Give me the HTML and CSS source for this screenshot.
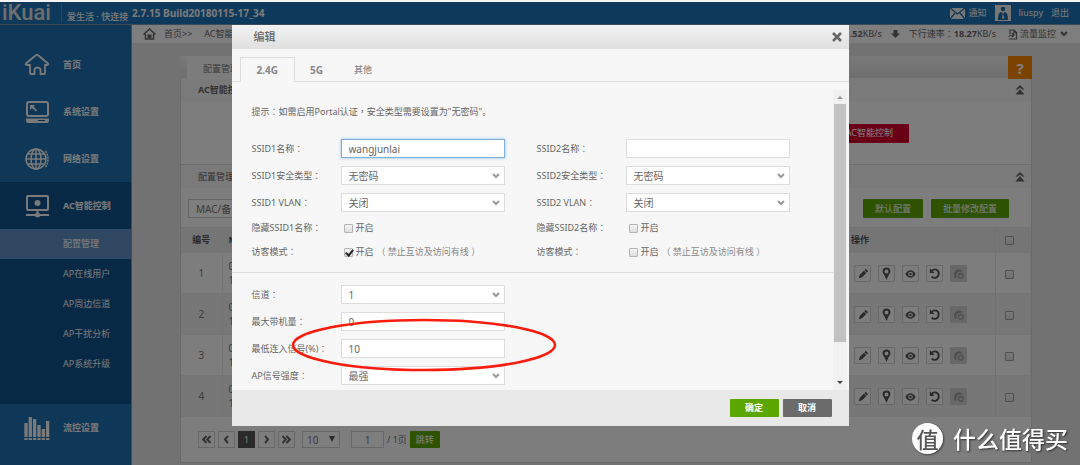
FILE: index.html
```html
<!DOCTYPE html>
<html lang="zh-CN">
<head>
<meta charset="utf-8">
<meta name="viewport" content="width=device-width, initial-scale=1">
<title>iKuai</title>
<link rel="stylesheet" href="styles.css">
</head>
<body>
<svg class="defs" aria-hidden="true">
  <symbol id="chev" viewBox="0 0 8 6"><path d="M1 1l3 3 3-3" fill="none" stroke="currentColor" stroke-width="2"/></symbol>
  <symbol id="pencil" viewBox="0 0 16 16"><path d="M4 13l1-3.500 4.500-4.500 2.500 2.500L7.500 12zM10 4.500l1.500-1.500 2.500 2.500L12.500 7z" fill="currentColor"/></symbol>
  <symbol id="pin" viewBox="0 0 16 16"><path fill-rule="evenodd" d="M8 1.500a4.200 4.200 0 0 1 4.200 4.200c0 2-1.700 3.300-2.500 5.300L8 15l-1.700-4C5.500 9 3.800 7.700 3.800 5.700A4.200 4.200 0 0 1 8 1.500zM8 3.700a2.100 2.100 0 1 0 0 4.200 2.100 2.100 0 0 0 0-4.200z" fill="currentColor"/></symbol>
  <symbol id="eye" viewBox="0 0 16 16"><path fill-rule="evenodd" d="M2.500 8.500C4 5.800 6 4.500 8 4.500s4 1.300 5.500 4c-1.500 2.700-3.500 4-5.500 4s-4-1.300-5.500-4zM8 6a2.500 2.500 0 1 0 0 5 2.500 2.500 0 0 0 0-5z" fill="currentColor"/><circle cx="8" cy="8.500" r="1.300" fill="currentColor"/></symbol>
  <symbol id="undo" viewBox="0 0 16 16"><path d="M5 5.200C8 2 12.500 4 12.500 8c0 4.500-5 5.800-7.500 3.500" fill="none" stroke="currentColor" stroke-width="2"/><path d="M3 2.500v5h5z" fill="currentColor"/></symbol>
  <symbol id="upg" viewBox="0 0 16 16"><path d="M4 12.500C2.500 9 3.500 4.500 8 3.500c2 0 3.500 1 4.500 2.500H8C6 7 5.500 9 6 12.500z" fill="currentColor"/><circle cx="10.500" cy="10.500" r="2.500" fill="none" stroke="currentColor" stroke-width="1.500"/></symbol>
  <symbol id="fold" viewBox="0 0 10 10"><path d="M5 0l4.500 4.500H7.500L5 2.800 2.500 4.500H.5z M5 4l4.500 5.500H.5z" fill="currentColor"/></symbol>
</svg>

<header class="top">
  <span class="logo">iKuai</span>
  <span class="slogan">爱生活 · 快连接</span>
  <span class="version">2.7.15 Build20180115-17_34</span>
  <nav class="user">
    <a href="#"><svg width="15" height="11" viewBox="0 0 15 11"><path d="M0 0h15v11H0z" fill="#eee"/><path d="M0 0l7.500 6L15 0M0 11l5-6M15 11l-5-6" fill="none" stroke="#1b6ca8" stroke-width="1.300"/></svg>通知</a>
    <a href="#"><svg width="16" height="16" viewBox="0 0 16 16"><path d="M0 0h16v16H0z" fill="#eee"/><circle cx="8" cy="4" r="2.200" fill="#1b6ca8"/><path d="M3 15c0-5 1-8 3.500-8l1.500 2 1.500-2C12 7 13 10 13 15z" fill="#1b6ca8"/><path d="M8 8l1 5-1 1-1-1z" fill="#eee"/></svg><span>liuspy</span></a>
    <a href="#">退出</a>
  </nav>
</header>

<div class="layout">
  <aside class="side">
    <a class="item" href="#"><svg width="26" height="26" viewBox="0 0 26 26"><path d="M6 13H3q-2 0-1-1.500L11.500 3.500q1.500-1.200 3 0L24 11.500q1 1.500-1 1.500h-2v8q0 1-1 1h-3.500v-5q-3.500-3-6 0v5H7q-1 0-1-1z" fill="none" stroke="currentColor" stroke-width="1.800" stroke-linejoin="round"/></svg>首页</a>
    <a class="item" href="#"><svg width="26" height="26" viewBox="0 0 26 26"><rect x="3" y="3" width="21" height="14" rx="2" fill="none" stroke="currentColor" stroke-width="2"/><path d="M6 6h5l-1.500 1.500 3.500 4-1 1-4-3.500L6 11z" fill="currentColor"/><path d="M2 19.500h23V22q0 2-2 2H4q-2 0-2-2z" fill="currentColor"/><path d="M14 21.500h7" stroke="#20598a"/></svg>系统设置</a>
    <a class="item" href="#"><svg width="26" height="26" viewBox="0 0 26 26" fill="none" stroke="currentColor" stroke-width="1.500"><circle cx="12" cy="13" r="10"/><ellipse cx="12" cy="13" rx="5" ry="10"/><path d="M12 3v20M2 13h20M4 8h16M4 18h16"/><path d="M21.500 5q5 8 0 16" stroke-dasharray="2 1"/></svg>网络设置</a>
    <a class="item on" href="#"><svg width="26" height="26" viewBox="0 0 26 26"><rect x="3" y="3" width="21" height="14" rx="1" fill="none" stroke="currentColor" stroke-width="2"/><circle cx="13.500" cy="10" r="3" fill="currentColor"/><path d="M13.500 17v5M2 22h23" stroke="currentColor" stroke-width="2"/><circle cx="13.500" cy="22" r="2.500" fill="currentColor"/></svg>AC智能控制</a>
    <nav class="sub">
      <a class="cur" href="#">配置管理</a>
      <a href="#">AP在线用户</a>
      <a href="#">AP周边信道</a>
      <a href="#">AP干扰分析</a>
      <a href="#">AP系统升级</a>
    </nav>
    <a class="item" href="#"><svg width="26" height="26" viewBox="0 0 26 26"><path d="M2 22V8M6.300 22V2M10.600 22V4M15 22V10M19.300 22v-8M23.600 22V6M2 25v-2M6.300 25v-2M10.600 25v-2M15 25v-2M19.300 25v-2M23.600 25v-2" stroke="currentColor" stroke-width="3.300"/></svg>流控设置</a>
    <a class="item" href="#" aria-label="更多"><svg width="26" height="26" viewBox="0 0 26 26"><rect x="6" y="3" width="19" height="20" rx="2" fill="currentColor"/></svg></a>
  </aside>

  <main class="main">
    <div class="crumbs">
      <svg width="13" height="12" viewBox="0 0 13 12"><path d="M.5 6.500l6-5.500 6 5.500M2.500 6v5h8V6" fill="none" stroke="#666" stroke-width="1.500"/><path d="M4.500 6.500h4V10h-4z" fill="#666"/></svg>
      <a href="#">首页&gt;&gt;</a><a href="#">AC智能控制</a>
      <span class="rate"><b>.52</b>KB/s</span>
      <svg class="down" width="9" height="9" viewBox="0 0 9 9"><path d="M2.500 0h4v3.500H9L4.500 8 0 3.500h2.500z" fill="#666"/></svg>
      <span>下行速率<span class="mid" lang="zh-TW">：</span><b>18.27</b>KB/s</span>
      <a class="mon" href="#"><svg width="10" height="11" viewBox="0 0 10 11"><path d="M2 5V1h4l2.500 2.500V10H1M6 1v3h2.500M1 8q0-2 5-2M4 4l2 2-2 2" fill="none" stroke="#666" stroke-width="1.200"/></svg>流量监控<svg width="8" height="6"><use href="#chev"/></svg></a>
    </div>

    <section class="panel">
      <div class="tabbar"><span class="tab">配置管理</span><button class="help" aria-label="帮助">?</button></div>
      <h2 class="head"><b>AC智能控制</b><svg width="10" height="10"><use href="#fold"/></svg></h2>
      <div class="ctl"><button class="btn red">AC智能控制</button></div>
      <h2 class="head line">配置管理<svg width="10" height="10"><use href="#fold"/></svg></h2>
      <div class="tools">
        <select class="find" aria-label="搜索条件"><option>MAC/备注</option></select>
        <button class="btn green">默认配置</button>
        <button class="btn green">批量修改配置</button>
      </div>
      <table class="list">
        <colgroup><col class="c-no"><col><col class="c-op"><col class="c-ck"></colgroup>
        <thead><tr><th>编号</th><th class="l">MAC</th><th class="l">操作</th><th><input type="checkbox" aria-label="全选"></th></tr></thead>
        <tbody>
          <tr><td>1</td><td class="l">0<br>1</td><td class="l"><div class="ops"><button aria-label="编辑"><svg><use href="#pencil"/></svg></button><button aria-label="定位"><svg><use href="#pin"/></svg></button><button aria-label="查看"><svg><use href="#eye"/></svg></button><button aria-label="重启"><svg><use href="#undo"/></svg></button><button aria-label="升级" disabled><svg><use href="#upg"/></svg></button></div></td><td><input type="checkbox" aria-label="选择 1"></td></tr>
          <tr><td>2</td><td class="l">0<br>1</td><td class="l"><div class="ops"><button aria-label="编辑"><svg><use href="#pencil"/></svg></button><button aria-label="定位"><svg><use href="#pin"/></svg></button><button aria-label="查看"><svg><use href="#eye"/></svg></button><button aria-label="重启"><svg><use href="#undo"/></svg></button><button aria-label="升级" disabled><svg><use href="#upg"/></svg></button></div></td><td><input type="checkbox" aria-label="选择 2"></td></tr>
          <tr><td>3</td><td class="l">0<br>1</td><td class="l"><div class="ops"><button aria-label="编辑"><svg><use href="#pencil"/></svg></button><button aria-label="定位"><svg><use href="#pin"/></svg></button><button aria-label="查看"><svg><use href="#eye"/></svg></button><button aria-label="重启"><svg><use href="#undo"/></svg></button><button aria-label="升级" disabled><svg><use href="#upg"/></svg></button></div></td><td><input type="checkbox" aria-label="选择 3"></td></tr>
          <tr><td>4</td><td class="l">0<br>1</td><td class="l"><div class="ops"><button aria-label="编辑"><svg><use href="#pencil"/></svg></button><button aria-label="定位"><svg><use href="#pin"/></svg></button><button aria-label="查看"><svg><use href="#eye"/></svg></button><button aria-label="重启"><svg><use href="#undo"/></svg></button><button aria-label="升级" disabled><svg><use href="#upg"/></svg></button></div></td><td><input type="checkbox" aria-label="选择 4"></td></tr>
        </tbody>
      </table>
      <div class="pager">
        <button class="pg" aria-label="首页"><svg width="9" height="9" viewBox="0 0 9 9"><path d="M4.500 1L1.200 4.500l3.300 3.500M8.500 1L5.200 4.500 8.500 8"/></svg></button>
        <button class="pg" aria-label="上一页"><svg width="9" height="9" viewBox="0 0 9 9"><path d="M6 1L3 4.500 6 8"/></svg></button>
        <button class="pg now">1</button>
        <button class="pg" aria-label="下一页"><svg width="9" height="9" viewBox="0 0 9 9"><path d="M3 1l3 3.500L3 8"/></svg></button>
        <button class="pg" aria-label="末页"><svg width="9" height="9" viewBox="0 0 9 9"><path d="M.5 1l3.300 3.500L.5 8M4.500 1l3.300 3.500L4.500 8"/></svg></button>
        <span class="size"><select aria-label="每页条数"><option>10</option></select><svg width="6" height="6" viewBox="0 0 6 6"><path d="M0 0h6L3 6z" fill="#555"/></svg></span>
        <input class="goto" type="text" value="1" aria-label="页码"><span>/ 1页</span>
        <button class="btn green go">跳转</button>
      </div>
    </section>
  </main>
</div>

<div class="mask">
  <div class="modal" role="dialog" aria-labelledby="dlg">
    <div class="title"><h1 id="dlg">编辑</h1><button aria-label="关闭"><svg width="10" height="10" viewBox="0 0 10 10"><path d="M1 1l8 8M9 1L1 9" stroke="#666" stroke-width="2.500"/></svg></button></div>
    <div class="tabs"><button class="on">2.4G</button><button>5G</button><button>其他</button></div>
    <div class="body">
      <form class="form" id="f">
        <p class="tip">提示<span class="mid" lang="zh-TW">：</span>如需启用Portal认证<span class="mid" lang="zh-TW">，</span>安全类型需要设置为"无密码"。</p>
        <div class="cols">
          <div class="col">
            <div class="row"><label for="s1">SSID1名称<span class="mid" lang="zh-TW">：</span></label><input class="box focus" id="s1" type="text" value="wangjunlai"></div>
            <div class="row"><label for="t1">SSID1安全类型<span class="mid" lang="zh-TW">：</span></label><span class="sel"><select class="box" id="t1"><option>无密码</option></select><svg width="8" height="6"><use href="#chev"/></svg></span></div>
            <div class="row"><label for="v1">SSID1 VLAN<span class="mid" lang="zh-TW">：</span></label><span class="sel"><select class="box" id="v1"><option>关闭</option></select><svg width="8" height="6"><use href="#chev"/></svg></span></div>
            <div class="row ck"><span class="lab">隐藏SSID1名称<span class="mid" lang="zh-TW">：</span></span><label><input type="checkbox">开启</label></div>
            <div class="row ck"><span class="lab">访客模式<span class="mid" lang="zh-TW">：</span></span><label><input type="checkbox" checked>开启<em>（ 禁止互访及访问有线 ）</em></label></div>
          </div>
          <div class="col">
            <div class="row"><label for="s2">SSID2名称<span class="mid" lang="zh-TW">：</span></label><input class="box" id="s2" type="text"></div>
            <div class="row"><label for="t2">SSID2安全类型<span class="mid" lang="zh-TW">：</span></label><span class="sel"><select class="box" id="t2"><option>无密码</option></select><svg width="8" height="6"><use href="#chev"/></svg></span></div>
            <div class="row"><label for="v2">SSID2 VLAN<span class="mid" lang="zh-TW">：</span></label><span class="sel"><select class="box" id="v2"><option>关闭</option></select><svg width="8" height="6"><use href="#chev"/></svg></span></div>
            <div class="row ck"><span class="lab">隐藏SSID2名称<span class="mid" lang="zh-TW">：</span></span><label><input type="checkbox">开启</label></div>
            <div class="row ck"><span class="lab">访客模式<span class="mid" lang="zh-TW">：</span></span><label><input type="checkbox">开启<em>（ 禁止互访及访问有线 ）</em></label></div>
          </div>
        </div>
        <hr>
        <div class="cols">
          <div class="col">
            <div class="row"><label for="ch">信道<span class="mid" lang="zh-TW">：</span></label><span class="sel"><select class="box" id="ch"><option>1</option></select><svg width="8" height="6"><use href="#chev"/></svg></span></div>
            <div class="row"><label for="mx">最大带机量<span class="mid" lang="zh-TW">：</span></label><input class="box" id="mx" type="text" value="0"></div>
            <div class="row"><label for="mn">最低连入信号(%)<span class="mid" lang="zh-TW">：</span></label><input class="box" id="mn" type="text" value="10"></div>
            <div class="row"><label for="pw">AP信号强度<span class="mid" lang="zh-TW">：</span></label><span class="sel"><select class="box" id="pw"><option>最强</option></select><svg width="8" height="6"><use href="#chev"/></svg></span></div>
          </div>
        </div>
      </form>
      <div class="scroll" aria-hidden="true">
        <svg width="6" height="14" viewBox="0 0 6 14"><path d="M0 9h6L3 6z" fill="#999"/></svg>
        <i></i>
        <svg width="6" height="14" viewBox="0 0 6 14"><path d="M0 5h6L3 8z" fill="#444"/></svg>
      </div>
    </div>
    <div class="foot"><button class="btn ok">确定</button><button class="btn no">取消</button></div>
    <svg class="ring" width="266" height="54" viewBox="0 0 266 54"><ellipse cx="133" cy="27" rx="131" ry="25" fill="none" stroke="#fb1c0c" stroke-width="2.500"/></svg>
  </div>
</div>

<div class="mark"><span class="seal">值</span><span>什么值得买</span></div>
</body>
</html>
```
FILE: styles.css
```css
* { box-sizing: border-box; }
body {
  margin: 0;
  height: 100vh;
  overflow: hidden;
  display: flex;
  flex-direction: column;
  background: #e4e4e4;
  color: #666;
  font: 9px/14px "Noto Sans", "Noto Sans CJK SC", sans-serif;
}
a { color: inherit; text-decoration: none; }
button, input, select { font: inherit; color: inherit; margin: 0; padding: 0; border: 0; border-radius: 0; outline: 0; }
select { appearance: none; }
h1, h2, p { margin: 0; font-size: inherit; font-weight: normal; }
svg { display: block; flex: none; }
.defs { position: absolute; width: 0; height: 0; }
.mid { font-family: "Noto Sans CJK TC", sans-serif; line-height: 1; }

.top {
  flex: none;
  display: flex;
  align-items: center;
  height: 25px;
  padding: 0 11px 0 2px;
  border-top: 2px solid #f4f4f4;
  border-bottom: 1px solid #7a97ad;
  background: #1c72b4;
  color: #f6f6f6;
}
.logo { width: 59px; font: 500 22px/22px Roboto, sans-serif; color: #ddd; }
.slogan { padding: 7px 0 0 5px; border-left: 1px solid #5b92bd; line-height: 12px; width: 71px; white-space: nowrap; font-weight: 500; }
.version { font-size: 10px; font-weight: bold; white-space: nowrap; }
.user { margin-left: auto; display: flex; gap: 8px; }
.user a { display: flex; align-items: center; gap: 4px; }
.user a span { padding-left: 4px; }

.layout { flex: 1; display: flex; min-height: 0; }
.side { width: 132px; flex: none; padding-top: 16px; background: #1e70b0; color: #f4f4f4; border-right: 1px solid #8a9aa8; overflow: hidden; }
.item { display: flex; align-items: center; gap: 13px; height: 47px; padding-left: 24px; font-weight: bold; }
.item.on { background: #10528c; }
.sub { background: #10528c; padding-bottom: 25px; }
.sub a { display: block; padding-left: 63px; line-height: 30px; }
.sub .cur { background: #5e8fc2; font-weight: 500; }

.main { flex: 1; min-width: 0; display: flex; flex-direction: column; }
.crumbs { display: flex; align-items: center; height: 18px; padding: 0 12px 0 11px; background: #fdfdfd; color: #666; }
.crumbs > a { padding-left: 8px; }
.crumbs > a + a { padding-left: 12px; }
.rate { margin-left: auto; }
.down { margin: 0 9px; }
.crumbs .mon { display: flex; align-items: center; gap: 2px; padding-left: 12px; }
.mon svg:last-child { margin-left: 2px; }

.panel { margin: 13px 48px 0; background: #fbfbfb; border: 1px solid #d4d4d4; color: #777; }
.tabbar { display: flex; height: 23px; padding-left: 7px; background: linear-gradient(#f4f4f4, #dcdcdc); margin: -1px; }
.tab { padding: 0 16px; line-height: 25px; background: #f8f8f8; }
.help { margin-left: auto; width: 24px; background: #f98400; color: #fff; font-size: 15px; font-weight: bold; }
.head { display: flex; align-items: center; justify-content: space-between; height: 24px; padding: 0 6px 0 17px; background: #f4f4f4; color: #666; }
.line { border-top: 1px solid #dcdcdc; }
.ctl { display: flex; justify-content: flex-end; align-items: center; height: 62px; padding: 0 122px 0 0; }
.btn { height: 19px; padding: 0 12px; border-radius: 1px; color: #fff; white-space: nowrap; }
.red { background: #d4002a; padding: 0 16px; }
.green { background: #5ca600; }
.tools { display: flex; align-items: center; gap: 8px; height: 39px; padding: 2px 22px 0 7px; }
.find { width: 90px; height: 19px; margin-right: auto; padding-left: 7px; border: 1px solid #ccc; background: #fff; font-size: 10px; }
.list { width: 100%; table-layout: fixed; border-collapse: collapse; border-top: 1px solid #e4e4e4; }
.c-no { width: 41px; } .c-op { width: 151px; } .c-ck { width: 35px; }
.list th, .list td { padding: 0; text-align: center; border: 1px solid #ebebeb; border-width: 0 1px 1px 0; }
.list th { height: 25px; background: #ebebeb; color: #555; font-weight: bold; }
.list td { height: 41px; font-size: 10px; }
.list .l { text-align: left; padding-left: 6px; }
.list tr:nth-child(even) td { background: #efefef; }
.list th:nth-child(3), .list td:nth-child(3) { border-right-color: #e2e2e2; }
.list th:last-child, .list td:last-child { padding-right: 8px; }
.ops { display: flex; gap: 7px; padding-left: 3px; }
.ops button { width: 17px; height: 17px; border: 1px solid #d0d0d0; border-radius: 1px; background: #fbfbfb; color: #555; }
.ops svg { width: 15px; height: 15px; }
.ops button:disabled { background: #d0d0d0; color: #a0a0a0; }
.pager { display: flex; align-items: center; height: 45px; padding-left: 17px; gap: 3px; }
.pg { display: flex; align-items: center; justify-content: center; width: 17px; height: 17px; border: 1px solid #d0d0d0; background: #fbfbfb; }
.pg path { fill: none; stroke: #666; stroke-width: 2; }
.pg.now { background: #555; color: #eee; border-color: #555; }
.size { position: relative; margin: 0 8px 0 4px; }
.size select { display: block; width: 38px; height: 17px; padding-left: 4px; border: 1px solid #d0d0d0; background: #fcfcfc; font-size: 10px; line-height: 14px; }
.size svg { position: absolute; right: 5px; top: 5px; }
.goto { width: 33px; height: 17px; border: 1px solid #d0d0d0; background: #fcfcfc; text-align: center; font-size: 10px; }
.go { height: 17px; padding: 0 6px; }

input[type="checkbox"] {
  appearance: none;
  position: relative;
  width: 9px;
  height: 9px;
  border: 1px solid #b4b4b4;
  border-radius: 1px;
  background: linear-gradient(#f4f4f4, #dedede);
  vertical-align: middle;
}
.list input[type="checkbox"] { border-color: #a0a0a0; }
input[type="checkbox"]:checked::after {
  content: "";
  position: absolute;
  left: 2px;
  top: -1px;
  width: 3px;
  height: 6px;
  border: solid #222;
  border-width: 0 2px 2px 0;
  transform: rotate(40deg);
}

.mask { position: fixed; inset: 2px 0 0; display: flex; justify-content: center; align-items: flex-start; padding-top: 23px; background: rgba(0, 0, 0, .5); }
.modal { position: relative; width: 617px; background: #f7f7f7; }
.title { display: flex; align-items: center; justify-content: space-between; height: 24px; padding: 0 7px 0 22px; background: linear-gradient(#f2f2f2, #e0e0e0); }
.title h1 { font-size: 11px; font-weight: 500; }
.title button { background: none; }
.tabs { display: flex; height: 33px; padding: 8px 8px 0; box-shadow: inset 0 -1px #ddd; }
.tabs button { padding: 0 16px; background: none; font-size: 9px; color: #888; font-weight: bold; }
.tabs button:nth-child(2) { font-size: 10px; padding: 0 15px; }
.tabs button:last-child { font-weight: 500; }
.tabs .on { border: 1px solid #ddd; border-bottom: 0; background: #f7f7f7; font-size: 10px; }
.body { display: flex; height: 308px; padding: 8px 2px 0 0; overflow: hidden; }
.form { flex: 1; }
.tip { padding: 15px 20px 16px; }
.cols { display: grid; grid-template-columns: 253px 253px; column-gap: 32px; padding-left: 20px; }
.row { display: grid; grid-template-columns: 89px 1fr; align-items: center; height: 27px; }
.ck { height: 24px; }
.row label, .lab { white-space: nowrap; }
.ck label { display: flex; align-items: center; gap: 3px; padding-left: 3px; }
.ck em { font-style: normal; color: #888; }
.box { display: block; width: 100%; height: 19px; padding: 0 7px; border: 1px solid #ddd; background: #fff; font-size: 10px; }
.focus { border-color: #7fb0dc; box-shadow: 0 0 3px #8fbfec; }
.sel { position: relative; }
.sel svg { position: absolute; right: 5px; top: 7px; color: #999; }
hr { height: 1px; margin: 8px 0; border: 0; background: #ddd; }
.scroll { display: flex; flex-direction: column; align-items: center; width: 14px; background: #f1f1f1; }
.scroll i { width: 12px; height: 238px; background: #c1c1c1; margin-bottom: auto; }
.foot { display: flex; justify-content: flex-end; align-items: center; gap: 4px; height: 36px; padding-right: 17px; background: #e8e8e8; }
.foot .btn { width: 49px; font-weight: bold; height: 18px; }
.ok { background: #5ca600; }
.no { background: #6b6b6b; }
.ring { position: absolute; left: 59px; top: 293px; pointer-events: none; }

.mark { position: fixed; right: 12px; bottom: 11px; display: flex; align-items: center; gap: 10px; color: #fff; font: 500 23px/31px "Noto Sans CJK SC", sans-serif; text-shadow: 1px 1px 2px #333; }
.seal { width: 31px; height: 31px; border-radius: 50%; background: #fff; color: #555; text-align: center; text-shadow: none; font-size: 22px; box-shadow: 1px 1px 2px #444; }
```
